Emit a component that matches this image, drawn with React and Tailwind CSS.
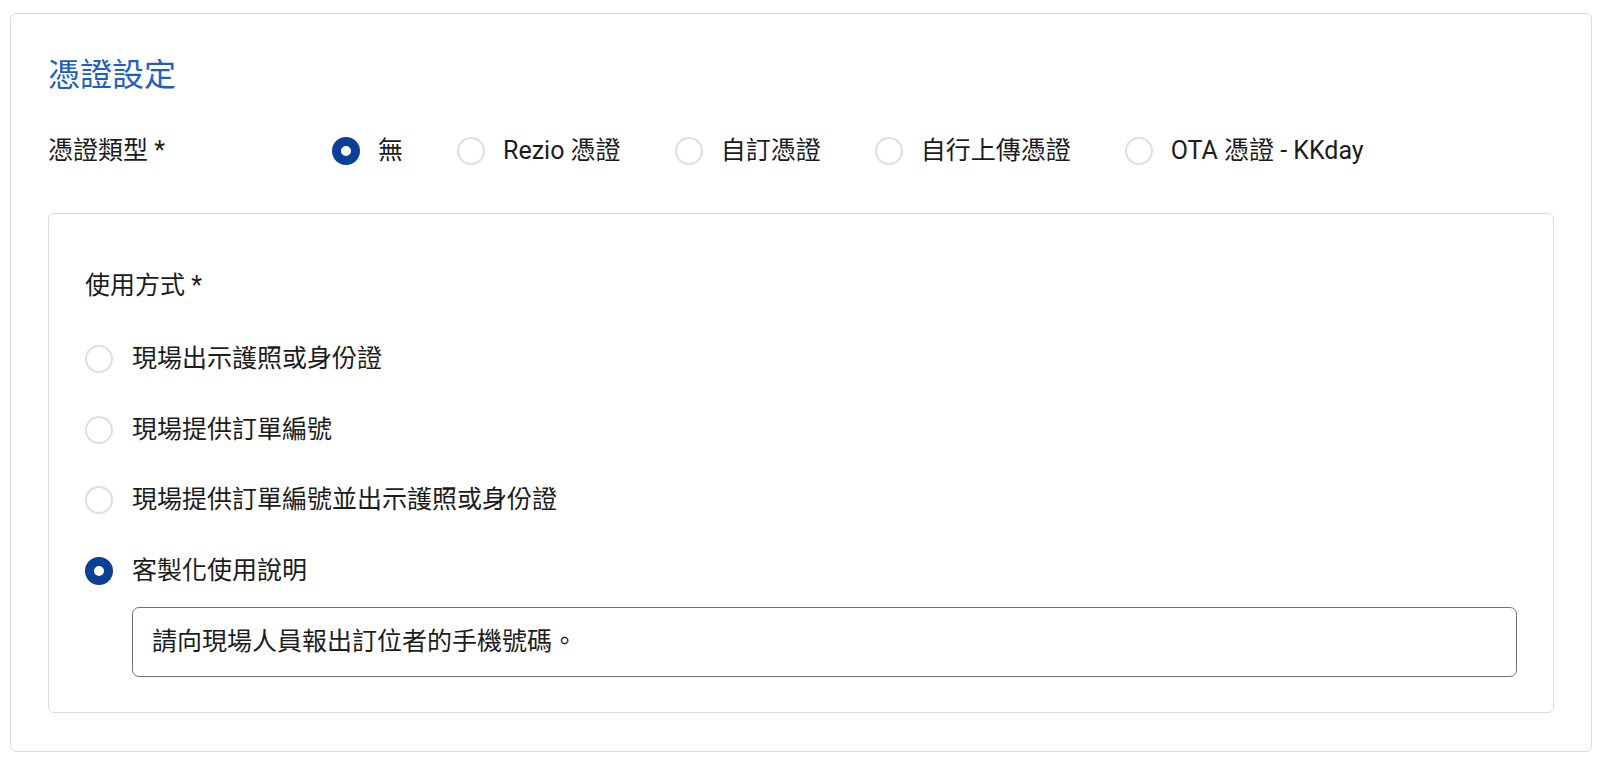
import { useState } from 'react';

const font = { fontFamily: 'Roboto, "Noto Sans CJK TC", sans-serif' };

function Radio({ checked }) {
  return checked ? (
    <span className="w-[28px] h-[28px] rounded-full border-[9px] border-[#0b3f98] bg-white shrink-0 box-border" />
  ) : (
    <span className="w-[28px] h-[28px] rounded-full border-2 border-[#dedede] bg-white shrink-0 box-border" />
  );
}

const types = ['無', 'Rezio 憑證', '自訂憑證', '自行上傳憑證', 'OTA 憑證 - KKday'];
const usages = ['現場出示護照或身份證', '現場提供訂單編號', '現場提供訂單編號並出示護照或身份證', '客製化使用說明'];

export default function App() {
  const [type, setType] = useState(0);
  const [usage, setUsage] = useState(3);

  return (
    <div className="bg-white w-[1600px] h-[766px] pt-[13px] pl-[10px] pr-[8px]" style={font}>
      <div className="border border-[#dcdcdc] rounded-[6px] px-[37px] pt-[41px] pb-[38px] text-[#1c1c1c]">
        <h2 className="text-[32px] leading-[40px] text-[#1d5fc6] font-normal">憑證設定</h2>

        <div className="flex items-center mt-[42px] h-[28px]">
          <div className="w-[284px] text-[25px] leading-[32px]">憑證類型 *</div>
          <div className="flex items-center gap-[54px]">
            {types.map((t, i) => (
              <label key={t} className="flex items-center gap-[18px] cursor-pointer" onClick={() => setType(i)}>
                <Radio checked={type === i} />
                <span className="text-[25px] leading-[32px]">{t}</span>
              </label>
            ))}
          </div>
        </div>

        <div className="mt-[48px] border border-[#dcdcdc] rounded-[6px] pl-[36px] pr-[36px] pt-[56px] pb-[35px]">
          <div className="text-[25px] leading-[32px]">使用方式 *</div>
          <div className="flex flex-col gap-[42.5px] mt-[43px]">
            {usages.map((u, i) => (
              <label key={u} className="flex items-center gap-[19px] h-[28px] cursor-pointer" onClick={() => setUsage(i)}>
                <Radio checked={usage === i} />
                <span className="text-[25px] leading-[32px]">{u}</span>
              </label>
            ))}
          </div>
          <div className="mt-[22px] ml-[47px] h-[70px] border border-[#737373] rounded-[7px] flex items-center px-[19px] text-[25px]">
            請向現場人員報出訂位者的手機號碼。
          </div>
        </div>
      </div>
    </div>
  );
}
